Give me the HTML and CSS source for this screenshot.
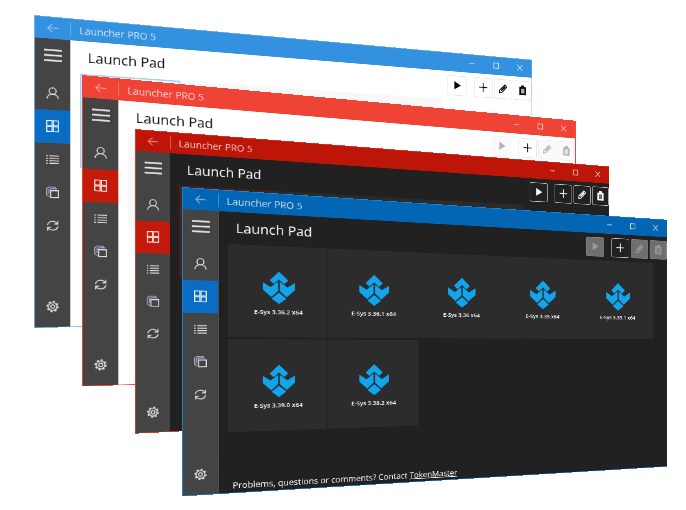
FILE: index.html
```html
<!DOCTYPE html>
<html lang="en">
<head>
<meta charset="utf-8">
<title>Launcher PRO 5</title>
<link rel="stylesheet" href="styles.css">
</head>
<body>
<svg class="defs" width="0" height="0" aria-hidden="true">
  <symbol id="i-back" viewBox="0 0 24 24"><path d="M22 12H3M11 4l-8 8 8 8" fill="none" stroke="currentColor" stroke-width="2"/></symbol>
  <symbol id="i-min" viewBox="0 0 12 12"><path d="M1 6h10" fill="none" stroke="currentColor" stroke-width="1.2"/></symbol>
  <symbol id="i-max" viewBox="0 0 12 12"><rect x="1.5" y="1.5" width="9" height="9" fill="none" stroke="currentColor" stroke-width="1.4"/></symbol>
  <symbol id="i-close" viewBox="0 0 12 12"><path d="M1 1l10 10M11 1L1 11" fill="none" stroke="currentColor" stroke-width="1.2"/></symbol>
  <symbol id="i-menu" viewBox="0 0 24 24"><path d="M0 4.500h24M0 12h24M0 19.500h24" fill="none" stroke="currentColor" stroke-width="2.400"/></symbol>
  <symbol id="i-user" viewBox="0 0 24 24"><circle cx="12" cy="8" r="6.500" fill="none" stroke="currentColor" stroke-width="2"/><path d="M1.500 23.500c0-5.500 4.500-9.200 10.500-9.200s10.500 3.700 10.500 9.200" fill="none" stroke="currentColor" stroke-width="2"/></symbol>
  <symbol id="i-grid" viewBox="0 0 24 24"><g fill="none" stroke="currentColor" stroke-width="1.800"><rect x="1" y="1" width="10" height="10"/><rect x="13" y="1" width="10" height="10"/><rect x="1" y="13" width="10" height="10"/><rect x="13" y="13" width="10" height="10"/></g></symbol>
  <symbol id="i-list" viewBox="0 0 24 24"><path d="M0 5h3M0 10h3M0 15h3M0 20h3M6 5h18M6 10h18M6 15h18M6 20h18" fill="none" stroke="currentColor" stroke-width="2"/></symbol>
  <symbol id="i-copy" viewBox="0 0 24 24"><path d="M1 10V4l4-3h12v3" fill="none" stroke="#b9a6e8" stroke-width="1.800"/><path d="M1 10v7l5 4" fill="none" stroke="#d9a6c8" stroke-width="1.800"/><path d="M5 15V6l4-2h11" fill="none" stroke="#a6b9e8" stroke-width="1.800"/><rect x="8" y="8" width="15" height="14" fill="none" stroke="currentColor" stroke-width="2"/></symbol>
  <symbol id="i-sync" viewBox="0 0 24 24"><path d="M2 11C3.500 5.500 7.500 3 12 3c3.700 0 6.800 1.700 9 5M22 13c-1.500 5.500-5.500 8-10 8-3.700 0-6.800-1.700-9-5" fill="none" stroke="currentColor" stroke-width="2"/><path d="M21.500 2v6.500H15M2.500 22v-6.500H9" fill="none" stroke="currentColor" stroke-width="2"/></symbol>
  <symbol id="i-gear" viewBox="0 0 24 24"><circle cx="12" cy="12" r="8" fill="none" stroke="currentColor" stroke-width="2"/><circle cx="12" cy="12" r="10.200" fill="none" stroke="currentColor" stroke-width="2.600" stroke-dasharray="4 4"/><circle cx="12" cy="12" r="3.600" fill="none" stroke="currentColor" stroke-width="2"/></symbol>
  <symbol id="i-play" viewBox="0 0 24 24"><path d="M5 2l17 10L5 22z" fill="currentColor"/></symbol>
  <symbol id="i-plus" viewBox="0 0 24 24"><path d="M12 1v22M1 12h22" fill="none" stroke="currentColor" stroke-width="2"/></symbol>
  <symbol id="i-pen" viewBox="0 0 24 24"><path d="M17 2l5 5L9 21l-7 1 1-7z" fill="none" stroke="currentColor" stroke-width="2.200"/><path d="M6 15l10-10 3 3L8 18z" fill="currentColor"/></symbol>
  <symbol id="i-paste" viewBox="0 0 24 24"><path d="M3 4h18v20H3z" fill="currentColor"/><path d="M8 0h8v6H8z" fill="currentColor"/><path d="M7 8h10v12H7z" fill="var(--paste-hole)"/></symbol>
  <symbol id="i-logo" viewBox="0 0 100 107"><g fill="#12a5ee"><path d="M50 0l29 29-13 12-16-15-16 15-13-12z"/><path d="M47.500 33v31L26 84 0 60V36l24 16z"/><path d="M52.500 33v31l21.500 20 26-24V36L76 52z"/><path d="M50 69l23 20-23 18-23-18z"/></g></symbol>
</svg>

<section class="win win-sky">
  <header class="bar">
    <span class="back"><svg class="ico-back"><use href="#i-back"/></svg></span>
    <span class="name">Launcher PRO 5</span>
    <span class="ctl"><svg><use href="#i-min"/></svg></span><span class="ctl"><svg><use href="#i-max"/></svg></span><span class="ctl"><svg><use href="#i-close"/></svg></span>
  </header>
  <div class="body">
    <nav class="side">
      <span class="burger"><svg><use href="#i-menu"/></svg></span>
      <span class="item"><svg><use href="#i-user"/></svg></span>
      <span class="item sel"><svg><use href="#i-grid"/></svg></span>
      <span class="item"><svg><use href="#i-list"/></svg></span>
      <span class="item"><svg><use href="#i-copy"/></svg></span>
      <span class="item"><svg><use href="#i-sync"/></svg></span>
      <span class="item gear"><svg><use href="#i-gear"/></svg></span>
    </nav>
    <main class="main">
      <div class="top">
        <h1>Launch Pad</h1>
        <div class="actions">
          <span class="act play"><svg><use href="#i-play"/></svg></span>
          <span class="act"><svg><use href="#i-plus"/></svg></span>
          <span class="act"><svg><use href="#i-pen"/></svg></span>
          <span class="act"><svg><use href="#i-paste"/></svg></span>
        </div>
      </div>
      <div class="tiles">
        <div class="tile focus"><svg><use href="#i-logo"/></svg><span>E-Sys 3.36.2 x64</span></div>
        <div class="tile"><svg><use href="#i-logo"/></svg><span>E-Sys 3.36.1 x64</span></div>
        <div class="tile"><svg><use href="#i-logo"/></svg><span>E-Sys 3.36 x64</span></div>
        <div class="tile"><svg><use href="#i-logo"/></svg><span>E-Sys 3.35 x64</span></div>
      </div>
    </main>
  </div>
</section>

<section class="win win-red">
  <header class="bar">
    <span class="back"><svg class="ico-back"><use href="#i-back"/></svg></span>
    <span class="name">Launcher PRO 5</span>
    <span class="ctl"><svg><use href="#i-min"/></svg></span><span class="ctl"><svg><use href="#i-max"/></svg></span><span class="ctl"><svg><use href="#i-close"/></svg></span>
  </header>
  <div class="body">
    <nav class="side">
      <span class="burger"><svg><use href="#i-menu"/></svg></span>
      <span class="item"><svg><use href="#i-user"/></svg></span>
      <span class="item sel"><svg><use href="#i-grid"/></svg></span>
      <span class="item"><svg><use href="#i-list"/></svg></span>
      <span class="item"><svg><use href="#i-copy"/></svg></span>
      <span class="item"><svg><use href="#i-sync"/></svg></span>
      <span class="item gear"><svg><use href="#i-gear"/></svg></span>
    </nav>
    <main class="main">
      <div class="top">
        <h1>Launch Pad</h1>
        <div class="actions">
          <span class="act play off"><svg><use href="#i-play"/></svg></span>
          <span class="act"><svg><use href="#i-plus"/></svg></span>
          <span class="act off"><svg><use href="#i-pen"/></svg></span>
          <span class="act off"><svg><use href="#i-paste"/></svg></span>
        </div>
      </div>
      <div class="tiles">
        <div class="tile"><svg><use href="#i-logo"/></svg><span>E-Sys 3.36.2 x64</span></div>
        <div class="tile"><svg><use href="#i-logo"/></svg><span>E-Sys 3.36.1 x64</span></div>
        <div class="tile"><svg><use href="#i-logo"/></svg><span>E-Sys 3.36 x64</span></div>
        <div class="tile"><svg><use href="#i-logo"/></svg><span>E-Sys 3.35 x64</span></div>
      </div>
    </main>
  </div>
</section>

<section class="win win-dark">
  <header class="bar">
    <span class="back"><svg class="ico-back"><use href="#i-back"/></svg></span>
    <span class="name">Launcher PRO 5</span>
    <span class="ctl"><svg><use href="#i-min"/></svg></span><span class="ctl"><svg><use href="#i-max"/></svg></span><span class="ctl"><svg><use href="#i-close"/></svg></span>
  </header>
  <div class="body">
    <nav class="side">
      <span class="burger"><svg><use href="#i-menu"/></svg></span>
      <span class="item"><svg><use href="#i-user"/></svg></span>
      <span class="item sel"><svg><use href="#i-grid"/></svg></span>
      <span class="item"><svg><use href="#i-list"/></svg></span>
      <span class="item"><svg><use href="#i-copy"/></svg></span>
      <span class="item"><svg><use href="#i-sync"/></svg></span>
      <span class="item gear"><svg><use href="#i-gear"/></svg></span>
    </nav>
    <main class="main">
      <div class="top">
        <h1>Launch Pad</h1>
        <div class="actions">
          <span class="act play"><svg><use href="#i-play"/></svg></span>
          <span class="act"><svg><use href="#i-plus"/></svg></span>
          <span class="act"><svg><use href="#i-pen"/></svg></span>
          <span class="act"><svg><use href="#i-paste"/></svg></span>
        </div>
      </div>
      <div class="tiles">
        <div class="tile focus"><svg><use href="#i-logo"/></svg><span>E-Sys 3.36.2 x64</span></div>
        <div class="tile"><svg><use href="#i-logo"/></svg><span>E-Sys 3.36.1 x64</span></div>
        <div class="tile"><svg><use href="#i-logo"/></svg><span>E-Sys 3.36 x64</span></div>
        <div class="tile"><svg><use href="#i-logo"/></svg><span>E-Sys 3.35 x64</span></div>
      </div>
    </main>
  </div>
</section>

<section class="win win-front">
  <header class="bar">
    <span class="back"><svg class="ico-back"><use href="#i-back"/></svg></span>
    <span class="name">Launcher PRO 5</span>
    <span class="ctl"><svg><use href="#i-min"/></svg></span><span class="ctl"><svg><use href="#i-max"/></svg></span><span class="ctl"><svg><use href="#i-close"/></svg></span>
  </header>
  <div class="body">
    <nav class="side">
      <span class="burger"><svg><use href="#i-menu"/></svg></span>
      <span class="item"><svg><use href="#i-user"/></svg></span>
      <span class="item sel"><svg><use href="#i-grid"/></svg></span>
      <span class="item"><svg><use href="#i-list"/></svg></span>
      <span class="item"><svg><use href="#i-copy"/></svg></span>
      <span class="item"><svg><use href="#i-sync"/></svg></span>
      <span class="item gear"><svg><use href="#i-gear"/></svg></span>
    </nav>
    <main class="main">
      <div class="top">
        <h1>Launch Pad</h1>
        <div class="actions">
          <span class="act play off"><svg><use href="#i-play"/></svg></span>
          <span class="act"><svg><use href="#i-plus"/></svg></span>
          <span class="act off"><svg><use href="#i-pen"/></svg></span>
          <span class="act off"><svg><use href="#i-paste"/></svg></span>
        </div>
      </div>
      <div class="tiles">
        <div class="tile"><svg><use href="#i-logo"/></svg><span>E-Sys 3.36.2 x64</span></div>
        <div class="tile"><svg><use href="#i-logo"/></svg><span>E-Sys 3.36.1 x64</span></div>
        <div class="tile"><svg><use href="#i-logo"/></svg><span>E-Sys 3.36 x64</span></div>
        <div class="tile"><svg><use href="#i-logo"/></svg><span>E-Sys 3.35 x64</span></div>
        <div class="tile"><svg><use href="#i-logo"/></svg><span>E-Sys 3.39.1 x64</span></div>
        <div class="tile"><svg><use href="#i-logo"/></svg><span>E-Sys 3.39.0 x64</span></div>
        <div class="tile"><svg><use href="#i-logo"/></svg><span>E-Sys 3.38.2 x64</span></div>
      </div>
      <p class="foot">Problems, questions or comments? Contact <a>TokenMaster</a></p>
    </main>
  </div>
</section>
</body>
</html>
```

FILE: styles.css
```css
html, body {
  margin: 0;
  height: 100%;
  background: #fff;
  overflow: hidden;
}

.defs {
  position: absolute;
}

/* Each window is a fixed 800x450 layout tilted onto the desktop */
.win {
  position: absolute;
  width: 800px;
  height: 450px;
  box-sizing: border-box;
  display: flex;
  flex-direction: column;
  overflow: hidden;
  transform-origin: 0 0;
  font-family: "Open Sans", "Noto Sans", sans-serif;
  background: var(--page);
  border: 1.5px solid var(--edge);
  --paste-hole: #fff;
}

.win-sky {
  left: 34px;
  top: 15.3px;
  transform: matrix3d(.7675, .0689, 0, .000291, 0, .696, 0, 0, 0, 0, 1, 0, 0, 0, 0, 1);
  --edge: #7ab8ee;
  --accent: #3391df;
  --sel: #0a6cc2;
  --page: #fff;
  --tile: #f8f8f8;
  --focus: #a9d0f2;
  --ink: #111;
  --act-bg: #fff;
  --act-bd: #e2e2e2;
  --act-ink: #000;
  --paste-hole: #b9a98a;
}

.win-red {
  left: 82.3px;
  top: 75px;
  transform: matrix3d(.7689, .0712, 0, .000308, 0, .6922, 0, 0, 0, 0, 1, 0, 0, 0, 0, 1);
  --edge: #f2473a;
  --accent: #ee4335;
  --sel: #c41a0c;
  --page: #fff;
  --tile: #f8f8f8;
  --focus: #f8f8f8;
  --ink: #111;
  --act-bg: #fff;
  --act-bd: #e2e2e2;
  --act-ink: #000;
  --off-bg: #fafafa;
  --off-bd: #ececec;
  --off-ink: #b5b5b5;
  --paste-hole: #e4e4e4;
}

.win-dark {
  left: 135px;
  top: 129.3px;
  transform: matrix3d(.7411, .0584, 0, .0003125, 0, .6771, 0, 0, 0, 0, 1, 0, 0, 0, 0, 1);
  --edge: #e23a2c;
  --accent: #bd1508;
  --sel: #c41a0c;
  --page: #212121;
  --tile: #2b2b2b;
  --focus: #5a1a14;
  --ink: #fff;
  --act-bg: #212121;
  --act-bd: #cfcfcf;
  --act-ink: #fff;
  --paste-hole: #5e6f86;
}

.win-front {
  left: 182px;
  top: 187.3px;
  transform: matrix3d(.7599, .0512, 0, .000316, 0, .6876, 0, 0, 0, 0, 1, 0, 0, 0, 0, 1);
  --edge: #1a88dd;
  --accent: #0266b4;
  --sel: #0a6cc2;
  --page: #212121;
  --tile: #2c2c2c;
  --focus: #2c2c2c;
  --ink: #fff;
  --act-bg: #212121;
  --act-bd: #cfcfcf;
  --act-ink: #fff;
  --off-bg: #6f6f6f;
  --off-bd: #8a8a8a;
  --off-ink: #9a9a9a;
  --paste-hole: #7f7f7f;
}

/* Title bar */
.bar {
  flex: none;
  height: 30.500px;
  display: flex;
  align-items: center;
  background: var(--accent);
  color: rgba(255, 255, 255, .78);
}

.back {
  flex: none;
  width: 48px;
  height: 20px;
  display: flex;
  justify-content: center;
  align-items: center;
  border-right: 1px solid rgba(255, 255, 255, .35);
  box-sizing: border-box;
  color: rgba(255, 255, 255, .5);
}

.ico-back {
  width: 17px;
  height: 17px;
}

.name {
  flex: 1;
  padding-left: 11px;
  font-size: 14.300px;
}

.ctl {
  flex: none;
  width: 46px;
  display: flex;
  justify-content: center;
}

.ctl svg {
  width: 12px;
  height: 12px;
}

/* Body */
.body {
  flex: 1;
  min-height: 0;
  display: flex;
}

.side {
  flex: none;
  width: 47px;
  display: flex;
  flex-direction: column;
  background: #444;
  color: #e6e6e6;
}

.win-front .side {
  border-right: 1px dotted #777;
}

.burger {
  flex: none;
  height: 48px;
  margin-bottom: 7px;
  display: flex;
  justify-content: center;
  align-items: center;
}

.burger svg {
  width: 24px;
  height: 24px;
}

.item {
  flex: none;
  height: 48px;
  display: flex;
  justify-content: center;
  align-items: center;
}

.item svg {
  width: 17px;
  height: 17px;
}

.sel {
  background: var(--sel);
  color: #fff;
}

.gear {
  margin-top: auto;
  margin-bottom: 6px;
}

.main {
  flex: 1;
  min-width: 0;
  display: flex;
  flex-direction: column;
  color: var(--ink);
}

.top {
  flex: none;
  height: 48px;
  display: flex;
  align-items: center;
  justify-content: space-between;
  padding: 0 0 0 23.500px;
}

h1 {
  margin: 0;
  font-size: 20px;
  font-weight: 400;
}

.actions {
  display: flex;
  gap: 3px;
}

.act {
  width: 35px;
  height: 34px;
  box-sizing: border-box;
  display: flex;
  justify-content: center;
  align-items: center;
  border: 1.500px solid var(--act-bd);
  border-radius: 3px;
  background: var(--act-bg);
  color: var(--act-ink);
}

.act svg {
  width: 17px;
  height: 17px;
}

.play {
  margin-right: 11px;
}

.off {
  background: var(--off-bg);
  border-color: var(--off-bd);
  color: var(--off-ink);
}

/* Launcher tiles */
.tiles {
  flex: none;
  display: grid;
  grid-template-columns: repeat(5, 141px);
  grid-auto-rows: 138px;
  column-gap: 1px;
  row-gap: 3px;
  padding-left: 13px;
}

.tile {
  display: flex;
  flex-direction: column;
  align-items: center;
  padding-top: 36px;
  box-sizing: border-box;
  background: var(--tile);
}

.focus {
  outline: 2px solid var(--focus);
  outline-offset: -2px;
}

.tile svg {
  width: 46px;
  height: 54px;
}

.tile span {
  margin-top: 4px;
  font-size: 9.300px;
  font-weight: 600;
  line-height: 12px;
}

.foot {
  margin: auto 0 2px;
  padding-left: 19px;
  font-size: 12.800px;
  line-height: 18px;
}

.foot a {
  text-decoration: underline;
}
```
